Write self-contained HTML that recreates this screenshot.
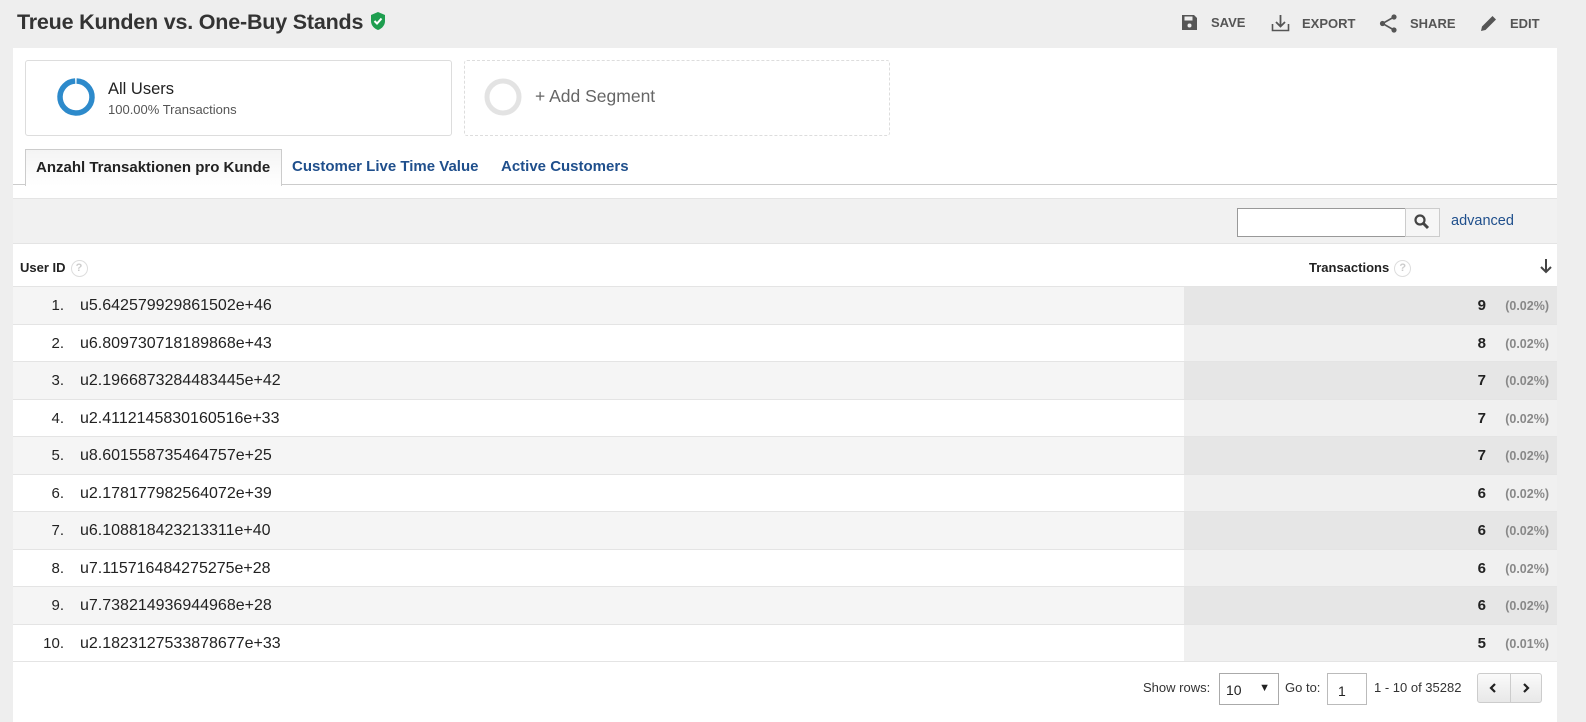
<!DOCTYPE html>
<html><head><meta charset="utf-8"><style>
*{box-sizing:border-box;margin:0;padding:0}
body{width:1586px;height:722px;background:#eeeeee;font-family:"Liberation Sans",Arial,sans-serif;position:relative;overflow:hidden;color:#222}
.a{position:absolute}
.title{left:17px;top:10px;font-size:21.5px;font-weight:bold;color:#333;letter-spacing:-0.2px}
.tb{top:14px;font-size:13px;font-weight:bold;color:#555;display:flex;align-items:center}
.panel{left:13px;top:48px;width:1544px;height:674px;background:#fff}
.seg{border:1px solid #ddd;border-radius:3px;background:#fff}
.tabs{font-size:15px;font-weight:bold}
.row{position:absolute;left:13px;width:1544px;height:37.5px;border-bottom:1px solid #e4e4e4;font-size:16px}
.row .n{position:absolute;right:1493px;top:10px;font-size:15px}
.row .id{position:absolute;left:67px;top:10px}
.row .r{position:absolute;left:1171px;top:0;width:373px;height:100%}
.row .v{position:absolute;right:71px;top:10px;font-weight:bold;font-size:15px}
.row .p{position:absolute;right:8px;top:12px;font-size:12.5px;font-weight:bold;color:#888}
.q{display:inline-block;width:17px;height:17px;border:1.5px solid #ddd;border-radius:50%;font-size:11px;color:#ccc;text-align:center;line-height:14px;vertical-align:middle;margin-left:5px}
</style></head><body>
<div class="a title">Treue Kunden vs. One-Buy Stands <svg width="18" height="20" viewBox="0 0 18 20" style="vertical-align:-2px"><path d="M9 1 L16 4 V10 C16 15 12 18 9 19 C6 18 2 15 2 10 V4 Z" fill="#1e9e4f"/><path d="M5.5 10 L8 12.5 L12.5 7.5" stroke="#fff" stroke-width="2" fill="none"/></svg></div>

<div class="a tb" style="left:1181px"><svg width="17" height="17" viewBox="0 0 17 17"><path d="M1 1H13L16 4V16H1Z" fill="#555"/><rect x="3.5" y="2.5" width="8" height="4" fill="#eee"/><circle cx="8.5" cy="11.5" r="2" fill="#eee"/></svg><span style="margin-left:13px">SAVE</span></div>
<div class="a tb" style="left:1271px"><svg width="19" height="18" viewBox="0 0 19 18"><path d="M1.5 10V16.5H17.5V10" stroke="#555" stroke-width="1.6" fill="none"/><path d="M9.5 1V12M5 8L9.5 12.5L14 8" stroke="#555" stroke-width="1.8" fill="none"/></svg><span style="margin-left:12px">EXPORT</span></div>
<div class="a tb" style="left:1379px"><svg width="19" height="19" viewBox="0 0 19 19"><circle cx="15" cy="3" r="2.6" fill="#555"/><circle cx="3.5" cy="9.5" r="2.6" fill="#555"/><circle cx="15" cy="16" r="2.6" fill="#555"/><path d="M15 3L3.5 9.5L15 16" stroke="#555" stroke-width="1.6" fill="none"/></svg><span style="margin-left:12px">SHARE</span></div>
<div class="a tb" style="left:1480px"><svg width="18" height="18" viewBox="0 0 18 18"><path d="M1 17L2 12.5L12.5 2L16 5.5L5.5 16Z" fill="#555"/></svg><span style="margin-left:12px">EDIT</span></div>

<div class="a panel"></div>
<div class="a seg" style="left:25px;top:60px;width:427px;height:76px"></div>
<svg class="a" style="left:56px;top:77px" width="40" height="40" viewBox="0 0 40 40"><circle cx="20" cy="20" r="16" stroke="#2d8acb" stroke-width="5.5" fill="none" stroke-dasharray="99 2" transform="rotate(-88 20 20)"/></svg>
<div class="a" style="left:108px;top:80px;font-size:16.5px;color:#222">All Users</div>
<div class="a" style="left:108px;top:102px;font-size:13px;color:#555">100.00% Transactions</div>
<div class="a seg" style="left:464px;top:60px;width:426px;height:76px;border:1px dashed #ddd"></div>
<svg class="a" style="left:483px;top:77px" width="40" height="40" viewBox="0 0 40 40"><circle cx="20" cy="20" r="16" stroke="#e3e3e3" stroke-width="5" fill="none"/></svg>
<div class="a" style="left:535px;top:86px;font-size:17.5px;color:#666">+ Add Segment</div>

<div class="a" style="left:13px;top:184px;width:1544px;height:1px;background:#ccc"></div>
<div class="a tabs" style="left:25px;top:149px;width:257px;height:37px;border:1px solid #ccc;border-bottom:none;background:linear-gradient(#f4f4f4,#fff);padding:9px 0 0 10px;color:#222;white-space:nowrap">Anzahl Transaktionen pro Kunde</div>
<div class="a tabs" style="left:292px;top:158px;color:#1f4f8c">Customer Live Time Value</div>
<div class="a tabs" style="left:501px;top:158px;color:#1f4f8c">Active Customers</div>

<div class="a" style="left:13px;top:198px;width:1544px;height:46px;background:#f1f1f1;border-top:1px solid #e4e4e4;border-bottom:1px solid #e4e4e4"></div>
<div class="a" style="left:1237px;top:208px;width:169px;height:29px;border:1px solid #999;background:#fff"></div>
<div class="a" style="left:1405px;top:208px;width:35px;height:29px;border:1px solid #ccc;background:#f6f6f6"></div>
<svg class="a" style="left:1413px;top:213px" width="18" height="18" viewBox="0 0 18 18"><circle cx="7" cy="7" r="4.5" stroke="#444" stroke-width="2.2" fill="none"/><path d="M10 10L15 15" stroke="#444" stroke-width="3"/></svg>
<div class="a" style="left:1451px;top:213px;font-size:14.5px;color:#1f4f8c">advanced</div>

<div class="a" style="left:20px;top:260px;font-size:13px;font-weight:bold">User ID<span class="q">?</span></div>
<div class="a" style="left:1309px;top:260px;font-size:13px;font-weight:bold">Transactions<span class="q">?</span></div>
<svg class="a" style="left:1539px;top:258px" width="14" height="16" viewBox="0 0 14 16"><path d="M7 1V14M2 9L7 14L12 9" stroke="#444" stroke-width="2" fill="none"/></svg>
<div class="a" style="left:13px;top:286px;width:1544px;height:1px;background:#e4e4e4"></div>

<div class="row" style="top:287px;background:#f5f5f5"><span class="n">1.</span><span class="id">u5.642579929861502e+46</span><div class="r" style="background:#e6e6e6"><span class="v">9</span><span class="p">(0.02%)</span></div></div>
<div class="row" style="top:324.5px;background:#fff"><span class="n">2.</span><span class="id">u6.809730718189868e+43</span><div class="r" style="background:#f0f0f0"><span class="v">8</span><span class="p">(0.02%)</span></div></div>
<div class="row" style="top:362px;background:#f5f5f5"><span class="n">3.</span><span class="id">u2.1966873284483445e+42</span><div class="r" style="background:#e6e6e6"><span class="v">7</span><span class="p">(0.02%)</span></div></div>
<div class="row" style="top:399.5px;background:#fff"><span class="n">4.</span><span class="id">u2.4112145830160516e+33</span><div class="r" style="background:#f0f0f0"><span class="v">7</span><span class="p">(0.02%)</span></div></div>
<div class="row" style="top:437px;background:#f5f5f5"><span class="n">5.</span><span class="id">u8.601558735464757e+25</span><div class="r" style="background:#e6e6e6"><span class="v">7</span><span class="p">(0.02%)</span></div></div>
<div class="row" style="top:474.5px;background:#fff"><span class="n">6.</span><span class="id">u2.178177982564072e+39</span><div class="r" style="background:#f0f0f0"><span class="v">6</span><span class="p">(0.02%)</span></div></div>
<div class="row" style="top:512px;background:#f5f5f5"><span class="n">7.</span><span class="id">u6.108818423213311e+40</span><div class="r" style="background:#e6e6e6"><span class="v">6</span><span class="p">(0.02%)</span></div></div>
<div class="row" style="top:549.5px;background:#fff"><span class="n">8.</span><span class="id">u7.115716484275275e+28</span><div class="r" style="background:#f0f0f0"><span class="v">6</span><span class="p">(0.02%)</span></div></div>
<div class="row" style="top:587px;background:#f5f5f5"><span class="n">9.</span><span class="id">u7.738214936944968e+28</span><div class="r" style="background:#e6e6e6"><span class="v">6</span><span class="p">(0.02%)</span></div></div>
<div class="row" style="top:624.5px;background:#fff"><span class="n">10.</span><span class="id">u2.1823127533878677e+33</span><div class="r" style="background:#f0f0f0"><span class="v">5</span><span class="p">(0.01%)</span></div></div>

<div class="a" style="left:1143px;top:680px;font-size:13px;color:#333">Show rows:</div>
<div class="a" style="left:1219px;top:673px;width:60px;height:32px;border:1px solid #aaa;background:#fff;font-size:14px;padding:8px 0 0 6px">10<span style="position:absolute;right:8px;top:8px;font-size:11px">▼</span></div>
<div class="a" style="left:1285px;top:680px;font-size:13px;color:#333">Go to:</div>
<div class="a" style="left:1327px;top:673px;width:40px;height:32px;border:1px solid #bbb;background:#fff;font-size:14px;padding:9px 0 0 10px">1</div>
<div class="a" style="left:1374px;top:680px;font-size:13px;color:#333">1 - 10 of 35282</div>
<div class="a" style="left:1477px;top:673px;width:65px;height:30px;border:1px solid #ccc;border-radius:3px;background:linear-gradient(#fafafa,#e8e8e8)"></div>
<div class="a" style="left:1510px;top:674px;width:1px;height:28px;background:#ccc"></div>
<svg class="a" style="left:1487px;top:681px" width="12" height="14" viewBox="0 0 12 14"><path d="M8 3L4 7L8 11" stroke="#222" stroke-width="2.2" fill="none"/></svg>
<svg class="a" style="left:1520px;top:681px" width="12" height="14" viewBox="0 0 12 14"><path d="M4 3L8 7L4 11" stroke="#222" stroke-width="2.2" fill="none"/></svg>
</body></html>
